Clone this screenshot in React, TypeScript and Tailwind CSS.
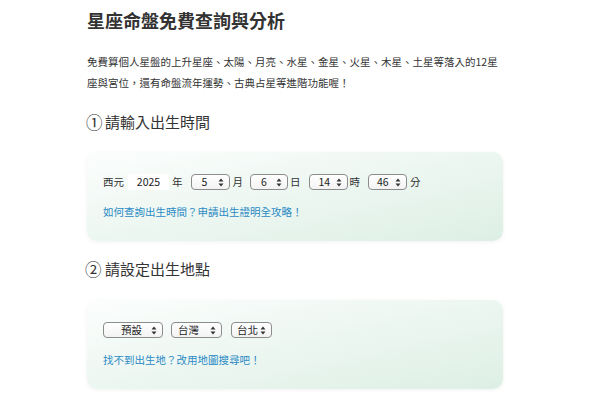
import React from "react";

const font = { fontFamily: '"Noto Sans CJK TC", "Noto Sans", sans-serif' };

function Arrows() {
  return (
    <svg width="6" height="9" viewBox="0 0 6 9" className="shrink-0">
      <path d="M3 0.5 L5.5 3.5 L0.5 3.5 Z" fill="#333" />
      <path d="M3 8.5 L5.5 5.5 L0.5 5.5 Z" fill="#333" />
    </svg>
  );
}

function Sel({ w, text, pl }: { w: string; text: string; pl: string }) {
  return (
    <div
      className={`${w} h-[16px] flex items-center justify-between rounded-[4px] border border-[#8c8c8c] bg-gradient-to-b from-white to-[#f3f3f3] pr-[5px] ${pl} text-[10.5px] leading-none text-[#222] shrink-0`}
    >
      <span>{text}</span>
      <Arrows />
    </div>
  );
}

export default function App() {
  return (
    <div className="w-[600px] h-[400px] bg-white overflow-hidden" style={font}>
      <div className="ml-[87px] w-[416px] flex flex-col">
        <h1 className="mt-[6px] text-[18px] leading-[28px] font-bold text-[#333]">
          星座命盤免費查詢與分析
        </h1>
        <p className="mt-[17px] text-[10.5px] leading-[21px] text-[#333]">
          免費算個人星盤的上升星座、太陽、月亮、水星、金星、火星、木星、土星等落入的12星
          <br />
          座與宮位，還有命盤流年運勢、古典占星等進階功能喔！
        </p>
        <h2 className="mt-[17px] -ml-[1px] flex items-center text-[15px] leading-[24px] text-[#333]">
          <span className="inline-block w-[19px] text-[16.5px]">①</span>
          <span>請輸入出生時間</span>
        </h2>
        <div className="mt-[18px] h-[89px] rounded-[10px] bg-gradient-to-br from-[#fcfefd] to-[#ddefe5] shadow-[0_1px_4px_rgba(0,0,0,0.06)] pl-[16px] pt-[22px]">
          <div className="flex items-center h-[16px] text-[10.5px] text-[#333]">
            <span>西元</span>
            <div className="ml-[4px] w-[41px] h-[16px] bg-white flex items-center justify-center text-[10.5px] text-[#222]">
              2025
            </div>
            <span className="ml-[3px]">年</span>
            <div className="ml-[8px]">
              <Sel w="w-[39px]" text="5" pl="pl-[10px]" />
            </div>
            <span className="ml-[3px]">月</span>
            <div className="ml-[7px]">
              <Sel w="w-[38px]" text="6" pl="pl-[10px]" />
            </div>
            <span className="ml-[2px]">日</span>
            <div className="ml-[8px]">
              <Sel w="w-[39px]" text="14" pl="pl-[9px]" />
            </div>
            <span className="ml-[2px]">時</span>
            <div className="ml-[8px]">
              <Sel w="w-[39px]" text="46" pl="pl-[8px]" />
            </div>
            <span className="ml-[3px]">分</span>
          </div>
          <div className="mt-[14px] text-[10.5px] leading-[16px] text-[#2a8ac4]">
            如何查詢出生時間？申請出生證明全攻略！
          </div>
        </div>
        <h2 className="mt-[16px] -ml-[2px] flex items-center text-[15px] leading-[24px] text-[#333]">
          <span className="inline-block w-[20px] text-[16.5px]">②</span>
          <span>請設定出生地點</span>
        </h2>
        <div className="mt-[19px] h-[89px] rounded-[10px] bg-gradient-to-br from-[#fcfefd] to-[#ddefe5] shadow-[0_1px_4px_rgba(0,0,0,0.06)] pl-[16px] pt-[22px]">
          <div className="flex items-center h-[16px]">
            <Sel w="w-[60px]" text="預設" pl="pl-[17px]" />
            <div className="ml-[8px]">
              <Sel w="w-[51px]" text="台灣" pl="pl-[6px]" />
            </div>
            <div className="ml-[9px]">
              <Sel w="w-[41px]" text="台北" pl="pl-[5px]" />
            </div>
          </div>
          <div className="mt-[14px] text-[10.5px] leading-[16px] text-[#2a8ac4]">
            找不到出生地？改用地圖搜尋吧！
          </div>
        </div>
      </div>
    </div>
  );
}
